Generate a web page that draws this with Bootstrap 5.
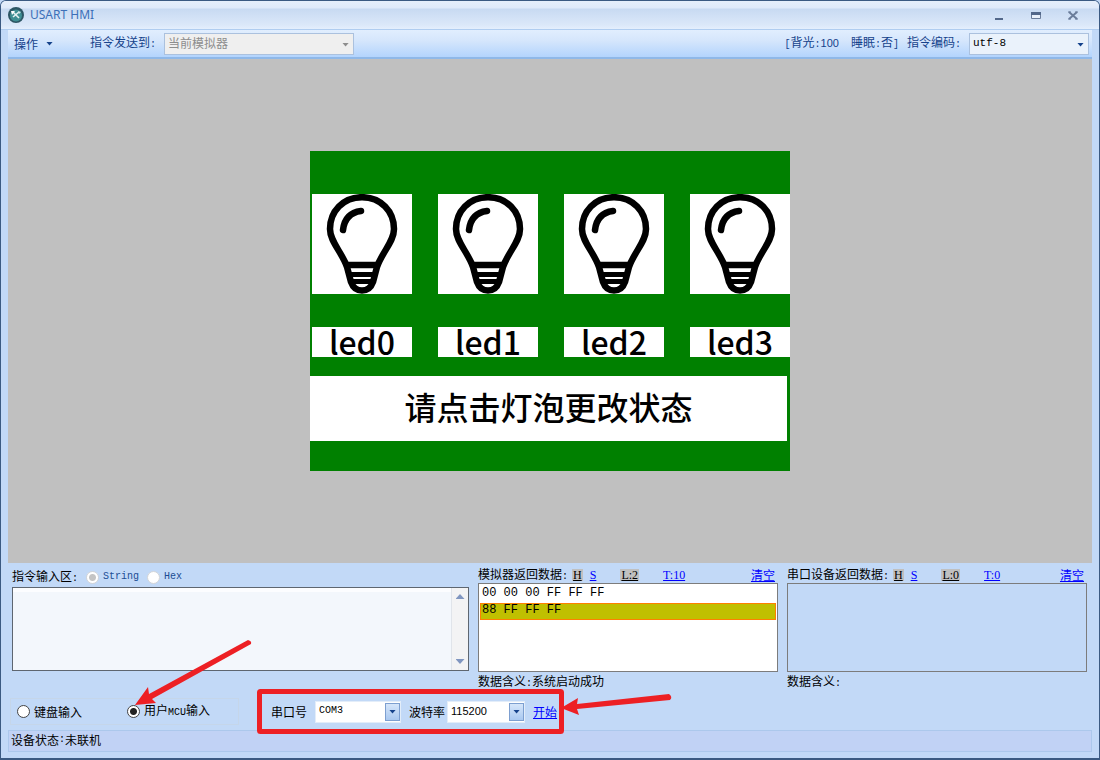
<!DOCTYPE html>
<html lang="zh-CN">
<head>
<meta charset="utf-8">
<meta name="viewport" content="width=device-width, initial-scale=1">
<title>USART HMI</title>
<link href="https://cdn.jsdelivr.net/npm/bootstrap@5.3.0/dist/css/bootstrap.min.css" rel="stylesheet">
<style>
  body { font: 12px/18px "Noto Sans CJK SC", sans-serif; color: #000; background: #c2d8f6; }
  a, a:hover { color: #00f; }
  .latin { font-family: "Liberation Mono", monospace; font-size: 10px; }
  .digits { font-family: "Liberation Sans", sans-serif; font-size: 11px; }
  .app-window { border: 1px solid #3b5a82; border-bottom-width: 2px; border-radius: 6px 6px 0 0; background: #c2d9f7; padding: 0 7px 6px; }
  .title-bar { height: 29px; margin: 0 -7px; padding: 0 18px 0 7px; background: linear-gradient(#e6effb 0, #dfeafa 7px, #c8daf2 8px, #dbe8f9 24px, #e4effd 100%); border-bottom: 1px solid #b0cdf0; border-radius: 5px 5px 0 0; }
  .title-text { font: 12px/18px "Noto Sans", sans-serif; color: #3c6fb8; margin-left: 6px; }
  .win-btns { gap: 21px; }
  .win-btn { width: 16px; height: 16px; padding: 0; border: 0; background: none; }
  .tool-bar { height: 29px; padding: 0 3px 0 6px; background: linear-gradient(#e1eefe, #d5e6fc 40%, #b3d4fd); border-bottom: 2px solid #8fb8e8; color: #15428b; white-space: nowrap; }
  .menu-btn { border: 0; background: none; color: inherit; padding: 0; margin-right: 37px; }
  .caret-down { width: 7px; height: 4px; background: #15428b; clip-path: polygon(0 0, 100% 0, 50% 100%); }
  .combo { position: relative; background: #fff; border: 1px solid #abc1de; height: 22px; }
  .combo select { appearance: none; width: 100%; height: 18px; border: 0; background: transparent; padding: 0 3px; line-height: 18px; color: #000; display: block; opacity: 1; outline: 0; }
  .combo .caret-down { position: absolute; right: 4px; top: 9px; pointer-events: none; }
  .combo-target { width: 190px; background: #efefef; }
  .combo-target select { color: #8d8d8d; font-size: 12px; }
  .combo-target .caret-down { background: #8d8d8d; }
  .combo-code { width: 120px; background: #eaf2fb; }
  .combo-code select { font-size: 11px; }
  .combo-port { width: 86px; border-color: #e3edf9; }
  .combo-baud { width: 78px; border-color: #e3edf9; margin-left: 2px; }
  .drop-face { position: absolute; right: 0; top: 1px; width: 15px; height: 18px; border: 1px solid #7d9fd0; background: linear-gradient(#d6e6fa, #a9c8f0); pointer-events: none; display: flex; align-items: center; justify-content: center; }
  .drop-face .caret-down { position: static; }
  .stage { background: #c0c0c0; }
  .screen { width: 480px; height: 320px; background: #008000; padding-top: 43px; font: 500 32px/30px "Noto Sans CJK SC", sans-serif; }
  .led-row { gap: 26px; padding-left: 2px; }
  .led-item { width: 100px; flex: none; }
  .bulb { display: block; width: 100px; height: 100px; padding: 0; border: 0; background: #fff; margin-bottom: 33px; }
  .led-name { height: 30px; line-height: 28px; background: #fff; text-align: center; }
  .hint-line { width: 477px; height: 65px; margin-top: 19px; background: #fff; line-height: 60px; text-align: center; }
  .console { padding: 0 5px 0 4px; position: relative; }
  .panes { display: grid; grid-template-columns: minmax(0, 1fr) 300px 300px; gap: 9px; height: 126px; }
  .input-head { height: 24px; padding-top: 4px; }
  .input-head .radio-ctl { margin-left: 8px; }
  .cmd-wrap { position: relative; height: 84px; }
  .cmd-box { width: 100%; height: 84px; border: 1px solid #5e6670; background: #f3f7fc; resize: none; display: block; box-shadow: inset 0 4px #fcfdff; padding: 4px; }
  .scroll-track { position: absolute; right: 1px; top: 1px; bottom: 1px; width: 17px; background: #f3f3f4; border-left: 1px solid #e0e4ea; padding: 6px 0; }
  .scroll-track i { width: 9px; height: 5px; background: #8096c0; clip-path: polygon(0 0, 100% 0, 50% 100%); }
  .scroll-track i:first-child { clip-path: polygon(0 100%, 100% 100%, 50% 0); }
  .radio-ctl { appearance: none; width: 13px; height: 13px; margin: 0; border: 1px solid #444; border-radius: 50%; background: #fff; flex: none; }
  .radio-ctl:checked { background: radial-gradient(circle, #222 0 3px, #fff 4px); }
  .radio-ctl:disabled { border-color: #d3d5d8; }
  .radio-ctl:disabled:checked { background: radial-gradient(circle, #c4c4c4 0 3px, #fff 4px); }
  .soft-label { color: #1b4d94; }
  .ret-head { height: 20px; padding: 4px 3px 0 0; white-space: nowrap; }
  .ret-head a { font: 12px/12px "Liberation Serif", serif; }
  .ret-head .to-send { margin-left: 7px; }
  .ret-head .clear-link { font: 12px/18px "Noto Sans CJK SC", sans-serif; margin-left: auto; }
  .ret-head .on { background: #c0c0c0; color: #000; padding: 0 1px; }
  .ret-list { height: 89px; border: 1px solid #7c7c7c; list-style: none; margin: 0; padding: 0 1px; background: #fff; font-family: "Liberation Mono", monospace; }
  .ret-list li { height: 18px; line-height: 16px; padding: 0 1px; border: 1px solid transparent; margin-bottom: 1px; }
  .ret-list li.picked { height: 17px; line-height: 13px; background: #c0c000; border-color: #ff8000; }
  .ret-list.idle { background: #c2d9f7; }
  .ctl-row { height: 41px; padding-top: 4px; }
  .source-box { width: 229px; height: 27px; margin-left: -2px; padding: 0 4px 0 6px; border: 1px solid #c5d6ea; }
  .status-bar { height: 22px; border: 1px solid #acc8ec; padding: 0 2px 2px; background: #c1d2f5; }
  .marks { position: absolute; left: 0; top: 0; width: 700px; height: 190px; pointer-events: none; overflow: visible; }
</style>
</head>
<body>
<div class="app-window d-flex flex-column min-vh-100">
  <header class="title-bar d-flex align-items-center">
    <svg width="16" height="16" viewBox="0 0 16 16" aria-hidden="true">
      <circle cx="8" cy="8" r="8" fill="#2d5664"/><circle cx="8" cy="8.500" r="6" fill="#3f8f93"/>
      <path d="M5 5l6 6M11 5l-6 5" stroke="#e4f2f2" stroke-width="1.600"/><path d="M3 4l4 0-3 4z" fill="#fff"/><path d="M10 4l3 1-2 2z" fill="#cfe6e8"/>
    </svg>
    <span class="title-text">USART HMI</span>
    <div class="win-btns ms-auto d-flex align-items-center">
      <button class="win-btn" aria-label="最小化"><svg class="d-block" width="16" height="16"><path d="M4 12h8" stroke="#53688a" stroke-width="2"/></svg></button>
      <button class="win-btn" aria-label="最大化"><svg class="d-block" width="16" height="16"><path d="M3.500 5.500h9v6h-9z" fill="#eaf1fb" stroke="#6b7d9a"/><path d="M3 6.500h10" stroke="#53688a" stroke-width="3"/></svg></button>
      <button class="win-btn" aria-label="关闭"><svg class="d-block" width="16" height="16"><path d="M4 5l8 7M12 5l-8 7" stroke="#6b7d9a" stroke-width="2"/><path d="M3 5h3M10 5h3M3 12h3M10 12h3" stroke="#6b7d9a"/></svg></button>
    </div>
  </header>

  <nav class="tool-bar d-flex align-items-center">
    <button class="menu-btn d-flex align-items-center"><span>操作</span><span class="caret-down ms-2"></span></button>
    <label for="target">指令发送到<span class="latin">:</span></label>
    <div class="combo combo-target ms-2"><select id="target" disabled><option>当前模拟器</option></select><span class="caret-down"></span></div>
    <span class="ms-auto"><span class="latin">[</span>背光<span class="latin">:</span><span class="digits">100</span></span>
    <span class="ms-2 ps-1">睡眠<span class="latin">:</span>否<span class="latin">]</span></span>
    <label class="ms-2" for="code">指令编码<span class="latin">:</span></label>
    <div class="combo combo-code ms-2"><select class="latin" id="code"><option>utf-8</option></select><span class="caret-down"></span></div>
  </nav>

  <main class="stage flex-grow-1 d-flex align-items-center justify-content-center">
    <div class="screen">
      <svg class="d-none">
        <symbol id="bulb" viewBox="0 0 100 100">
          <g fill="none" stroke="#000" stroke-width="6.500">
            <path d="M50 3.200C31 3.200 18 17.500 18 35C18 48 30 58 35 73L39 88Q42 96.500 50 96.500Q58 96.500 61 88L65 73C70 58 82 48 82 35C82 17.500 69 3.200 50 3.200Z"/>
            <path d="M31 36Q33 19 49 17" stroke-linecap="round"/>
            <path d="M34 71H66"/>
            <path d="M37 80.500H63M39 87.500H61" stroke-width="5"/>
          </g>
        </symbol>
      </svg>
      <div class="led-row d-flex">
        <div class="led-item"><button class="bulb" aria-label="led0"><svg class="d-block" width="100" height="100"><use href="#bulb"/></svg></button><div class="led-name">led0</div></div>
        <div class="led-item"><button class="bulb" aria-label="led1"><svg class="d-block" width="100" height="100"><use href="#bulb"/></svg></button><div class="led-name">led1</div></div>
        <div class="led-item"><button class="bulb" aria-label="led2"><svg class="d-block" width="100" height="100"><use href="#bulb"/></svg></button><div class="led-name">led2</div></div>
        <div class="led-item"><button class="bulb" aria-label="led3"><svg class="d-block" width="100" height="100"><use href="#bulb"/></svg></button><div class="led-name">led3</div></div>
      </div>
      <div class="hint-line">请点击灯泡更改状态</div>
    </div>
  </main>

  <section class="console">
    <div class="panes">
      <div>
        <div class="input-head d-flex align-items-center">
          <label for="cmd">指令输入区<span class="latin">:</span></label>
          <input class="radio-ctl" type="radio" name="fmt" id="fmtS" checked disabled><label class="latin soft-label ms-1" for="fmtS">String</label>
          <input class="radio-ctl" type="radio" name="fmt" id="fmtH" disabled><label class="latin soft-label ms-1" for="fmtH">Hex</label>
        </div>
        <div class="cmd-wrap">
          <textarea class="cmd-box" id="cmd"></textarea>
          <div class="scroll-track d-flex flex-column align-items-center justify-content-between"><i></i><i></i></div>
        </div>
      </div>
      <div>
        <div class="ret-head d-flex align-items-center">
          <span>模拟器返回数据<span class="latin">:</span></span><a class="on ms-1" href="#">H</a><a class="to-send" href="#">S</a><a class="on ms-4" href="#">L:2</a><a class="ms-4" href="#">T:10</a><a class="clear-link" href="#">清空</a>
        </div>
        <ul class="ret-list"><li>00 00 00 FF FF FF</li><li class="picked">88 FF FF FF</li></ul>
        <div>数据含义<span class="latin">:</span>系统启动成功</div>
      </div>
      <div>
        <div class="ret-head d-flex align-items-center">
          <span>串口设备返回数据<span class="latin">:</span></span><a class="on ms-1" href="#">H</a><a class="to-send" href="#">S</a><a class="on ms-4" href="#">L:0</a><a class="ms-4" href="#">T:0</a><a class="clear-link" href="#">清空</a>
        </div>
        <ul class="ret-list idle"></ul>
        <div>数据含义<span class="latin">:</span></div>
      </div>
    </div>

    <div class="ctl-row d-flex align-items-center">
      <div class="source-box d-flex align-items-center">
        <input class="radio-ctl" type="radio" name="src" id="srcK"><label class="ms-1" for="srcK">键盘输入</label>
        <input class="radio-ctl ms-auto" type="radio" name="src" id="srcM" checked><label class="ms-1 me-4" for="srcM">用户<span class="latin">MCU</span>输入</label>
      </div>
      <label class="ms-4 ps-2" for="port">串口号</label>
      <div class="combo combo-port ms-2"><select class="latin" id="port"><option>COM3</option></select><span class="drop-face"><span class="caret-down"></span></span></div>
      <label class="ms-2" for="baud">波特率</label>
      <div class="combo combo-baud"><select class="digits" id="baud"><option>115200</option></select><span class="drop-face"><span class="caret-down"></span></span></div>
      <a class="ms-2" href="#">开始</a>
    </div>
    <svg class="marks" viewBox="8 563 700 190" aria-hidden="true">
      <rect x="259.500" y="691.500" width="302" height="40" rx="1" fill="none" stroke="#ed2024" stroke-width="5"/>
      <g fill="#ed2024" stroke="none">
        <path d="M135 705L148 687L149 694L248 640Q252 641 251 644L152 699L156 703Z"/>
        <path d="M561 708L578 698L577 704L669 694Q673 697 670 700L577 709L579 715Z"/>
      </g>
    </svg>
  </section>

  <footer class="status-bar d-flex align-items-center">设备状态<span class="latin">:</span>未联机</footer>
</div>
<script src="https://cdn.jsdelivr.net/npm/bootstrap@5.3.0/dist/js/bootstrap.bundle.min.js"></script>
</body>
</html>
